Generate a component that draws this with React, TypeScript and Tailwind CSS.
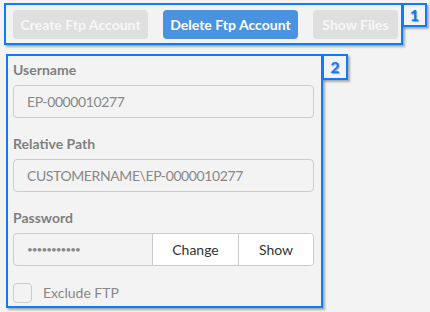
import React from "react";

export default function App() {
  return (
    <div className="min-h-screen bg-[#f3f3f3] pt-[3px] pl-[4px] font-['Lato','Open_Sans',sans-serif] text-[14px]">
      {/* Box 1: actions */}
      <div className="relative w-[399px] h-[42px] border-2 border-[#0a7cff] shadow-[2px_2px_2px_rgba(0,0,0,0.3)] flex items-center gap-[15px] pl-[7px]">
        <button className="w-[135px] h-[29px] rounded-[4px] bg-[#dfdfdf] text-[#f7f7f7] font-bold">
          Create Ftp Account
        </button>
        <button className="w-[135px] h-[29px] rounded-[4px] bg-[#4a93e0] text-white font-bold">
          Delete Ftp Account
        </button>
        <button className="w-[85px] h-[29px] rounded-[4px] bg-[#dfdfdf] text-[#f7f7f7] font-bold">
          Show Files
        </button>
        <span className="absolute left-[396px] top-[-2px] w-[25px] h-[24px] border-2 border-[#0a7cff] bg-[#f3f3f3] shadow-[2px_2px_2px_rgba(0,0,0,0.3)] flex items-center justify-center text-[#0a7cff] font-bold text-[16px] [text-shadow:1px_1px_1px_rgba(0,0,0,0.35)]">
          1
        </span>
      </div>

      {/* Box 2: account form */}
      <div className="relative mt-[9px] ml-[2px] w-[317px] h-[254px] border-2 border-[#0a7cff] shadow-[2px_2px_2px_rgba(0,0,0,0.3)] pl-[5px] pt-[4px]">
        <span className="absolute left-[314px] top-[-2px] w-[26px] h-[26px] border-2 border-[#0a7cff] bg-[#f3f3f3] shadow-[2px_2px_2px_rgba(0,0,0,0.3)] flex items-center justify-center text-[#0a7cff] font-bold text-[16px] [text-shadow:1px_1px_1px_rgba(0,0,0,0.35)]">
          2
        </span>

        <div className="w-[301px] flex flex-col gap-[16px]">
          <div>
            <p className="h-[20px] leading-[20px] text-[#808080] font-bold">Username</p>
            <div className="mt-[5px] h-[33px] rounded-[4px] border border-[#cccccc] flex items-center pl-[13px] text-[#888888] tracking-[-0.4px]">
              EP-0000010277
            </div>
          </div>

          <div>
            <p className="h-[20px] leading-[20px] text-[#808080] font-bold">Relative Path</p>
            <div className="mt-[5px] h-[33px] rounded-[4px] border border-[#cccccc] flex items-center pl-[13px] text-[#888888] tracking-[-0.4px]">
              CUSTOMERNAME\EP-0000010277
            </div>
          </div>

          <div>
            <p className="h-[20px] leading-[20px] text-[#808080] font-bold">Password</p>
            <div className="mt-[5px] h-[33px] rounded-[4px] border border-[#cccccc] flex overflow-hidden">
              <div className="w-[138px] flex items-center pl-[13px] text-[#888888] text-[10px] tracking-[-1px]">
                •••••••••••
              </div>
              <button className="w-[86px] bg-white border-l border-[#cccccc] text-[#333333]">Change</button>
              <button className="flex-1 bg-white border-l border-[#cccccc] text-[#333333]">Show</button>
            </div>
          </div>

          <label className="flex items-center gap-[11px] text-[#888888]">
            <span className="w-[19px] h-[20px] rounded-[4px] border border-[#cccccc] bg-[#f3f3f3]" />
            Exclude FTP
          </label>
        </div>
      </div>
    </div>
  );
}
